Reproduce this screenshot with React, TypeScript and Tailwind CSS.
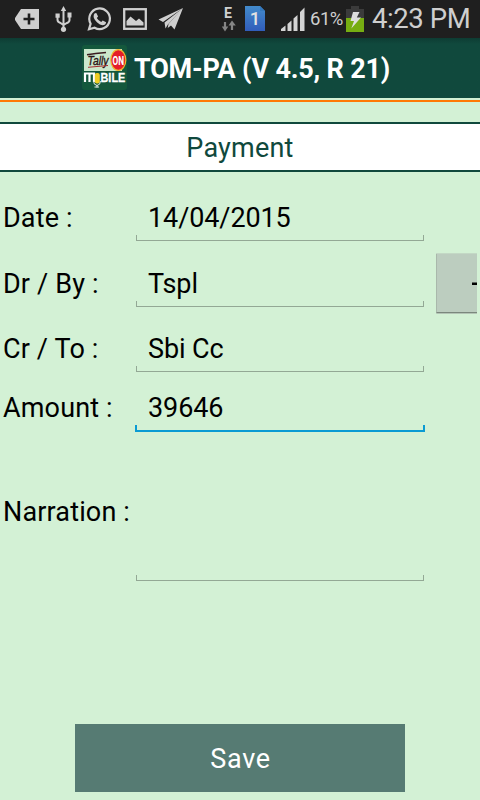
import React from "react";

const FONT = "font-['Roboto','Noto_Sans',sans-serif]";

function StatusBar() {
  return (
    <div className="flex h-[38px] shrink-0 items-center bg-[#1f1f1f] text-[#cfcfcf]">
      <svg width="210" height="38" viewBox="0 0 210 38" fill="#cfcfcf">
        <path d="M21 9H39V29H21L15 20V18Z" />
        <path d="M29 13.5V24.500M23.500 19H34.500" stroke="#1f1f1f" strokeWidth="2.6" />
        <g fill="none" stroke="#cfcfcf" strokeWidth="2">
          <path d="M63.500 10V28M57.500 16V19.500Q57.500 22 60 22.700L63.500 25M69.500 16V20Q69.500 22 67 23L63.500 25" />
        </g>
        <path d="M63.500 6L66.200 11H60.800ZM55.500 13.500h4.200v4.200h-4.200ZM67.500 12.500h4v5h-4Z" />
        <circle cx="63.500" cy="29.300" r="2.600" />
        <path d="M90.600 23.800A10.300 10.300 0 1 1 94.600 27.800L89 29.300Z" fill="none" stroke="#cfcfcf" strokeWidth="2.200" />
        <path d="M94.800 13.200l1.500-.3 1.800 3.500-1.300 1.700q1.600 2.800 4.400 4l1.500-1.600 3.400 1.800q-.3 2.900-3.600 2.900-2.600-.2-5.300-2.800-3.600-3.500-3.600-6.200 0-2 1.200-3Z" />
        <rect x="124.200" y="9.200" width="21.600" height="19.600" fill="none" stroke="#cfcfcf" strokeWidth="2.300" />
        <path d="M126.500 25.500V21L130.500 16.500L136 21L139 18.500L143.500 22.500V25.500Z" />
        <path d="M183 8L158.500 19.500L163 22ZM183 8L164.500 22.500L165.500 28.500L168 24.300ZM183 8L168.500 24L167.700 28L171 25.500L174.500 29.500Z" />
      </svg>
      <svg width="99" height="38" viewBox="210 0 99 38">
        <text x="224" y="17.500" fontFamily="Roboto" fontWeight="700" fontSize="15" fill="#cfcfcf" textLength="8" lengthAdjust="spacingAndGlyphs">E</text>
        <path d="M225 22V28M232 30V24" stroke="#858585" strokeWidth="2.200" />
        <path d="M221.800 26.500H228.300L225 31.500ZM228.500 25.500H235.800L232 20.500Z" fill="#858585" />
        <defs>
          <linearGradient id="sim" x1="0" x2="0" y1="0" y2="1">
            <stop stopColor="#438bcb" />
            <stop offset="1" stopColor="#315dbb" />
          </linearGradient>
        </defs>
        <path d="M245 6H260L265 11V31H245Z" fill="url(#sim)" />
        <path d="M260 6L265 11H260Z" fill="#3478bd" />
        <text x="249.800" y="25" fontFamily="Roboto" fontWeight="500" fontSize="18.500" fill="#e2e2e2">1</text>
        <path d="M281 31V29L285.500 25.500V31ZM287.500 31V24L291.500 20.500V31ZM293.500 31V18.500L297.500 15V31ZM300 31V12L304.500 7.500V31Z" fill="#d4d4d4" />
      </svg>
      <span className="mt-[2px] ml-[1px] w-[34px] whitespace-nowrap text-[18.5px] tracking-[-0.5px]">61%</span>
      <svg className="ml-[2px]" width="18" height="38" viewBox="346 0 18 38">
        <path d="M351 6H359V9H364V31H346V9H351Z" fill="#3b3b3b" />
        <path d="M346 18H364V32H346Z" fill="#77ad12" />
        <path d="M353 12H359.500L356.800 17.500H361L351.300 28.500L354 21H350.500Z" fill="#dedede" />
      </svg>
      <span className="ml-[8px] whitespace-nowrap text-[27.5px] leading-[38px] tracking-[-0.4px]">4:23 PM</span>
    </div>
  );
}

function Logo() {
  return (
    <svg className="-mt-[1px] overflow-visible" width="45" height="45" viewBox="0 0 45 45">
      <rect width="45" height="45" rx="3" fill="#14583c" />
      <path d="M2 4H40V26H2Z" fill="#cbe8cc" />
      <text x="5.500" y="19.500" fontFamily="Liberation Sans" fontStyle="italic" fontWeight="400" fontSize="13.500" fill="#2b1517" stroke="#2b1517" strokeWidth="0.400" textLength="21" lengthAdjust="spacingAndGlyphs">Tally</text>
      <path d="M5 9.800Q13 8.500 24 7.500" stroke="#3b1d20" strokeWidth="1.400" fill="none" />
      <path d="M6 22.300L26 20.500" stroke="#a32a30" strokeWidth="1" />
      <ellipse cx="36.300" cy="15" rx="7.500" ry="10.300" fill="#e51d2a" stroke="#efb52e" strokeWidth="1.200" />
      <text x="30.500" y="19.700" fontFamily="Roboto" fontWeight="700" fontSize="13" fill="#fff" textLength="11.500" lengthAdjust="spacingAndGlyphs">ON</text>
      <path d="M3 37V28.500H12V37M7.500 28.500V37" stroke="#fff" strokeWidth="2.200" fill="none" />
      <text x="18.500" y="37" fontFamily="Liberation Sans" fontWeight="700" fontSize="12.500" fill="#fff" stroke="#fff" strokeWidth="0.300" textLength="24.800" lengthAdjust="spacingAndGlyphs">BILE</text>
      <rect x="12.800" y="28" width="5" height="10.500" rx="2" fill="#f0cd24" />
      <path d="M11.500 36Q11.500 40 15 40.500Q18.500 40 18.500 36M15 40V42.500M12.500 42H17" stroke="#e5ece8" strokeWidth="1" fill="none" />
    </svg>
  );
}

type FieldProps = {
  label: string;
  value: string;
  row: string;
  focused?: boolean;
  children?: React.ReactNode;
};

function Field({ label, value, row, focused, children }: FieldProps) {
  return (
    <div className={`flex shrink-0 ${row}`}>
      <label className="w-[135px] shrink-0 whitespace-nowrap pl-[3px] tracking-[0.15px]">{label}</label>
      <div className="flex w-[290px] shrink-0 flex-col">
        <span className="h-full shrink-0 whitespace-pre pl-[13px] tracking-[-0.1px]">{value}</span>
        <div
          className={
            focused
              ? "-mt-[7px] h-[7px] shrink-0 border-x-2 border-b-2 border-[#0a9bd3]"
              : "mx-px -mt-[6px] h-[6px] shrink-0 border-x border-b border-[#93a895]"
          }
        />
      </div>
      {children}
    </div>
  );
}

export default function App() {
  return (
    <div className={`flex h-[800px] w-[480px] flex-col overflow-hidden bg-[#d3f1d5] text-[27px] text-black ${FONT}`}>
      <StatusBar />
      <header className="flex h-[60px] shrink-0 items-center bg-gradient-to-b from-[#0d3c33] to-[#10493d] to-10% pl-[82px]">
        <Logo />
        <h1 className="mt-[2px] ml-[7px] whitespace-nowrap text-[27px] font-bold tracking-[-0.2px] text-white">TOM-PA (V 4.5, R 21)</h1>
      </header>
      <div className="mt-[2px] h-[2px] shrink-0 bg-[#ff7905]" />
      <h2 className="mt-[20px] h-[50px] shrink-0 border-y-2 border-[#10493d] bg-white text-center text-[27px] leading-[49px] tracking-[0.2px] text-[#10493d]">
        Payment
      </h2>
      <main className="flex flex-1 flex-col">
        <Field label="Date :" value="14/04/2015" row="mt-[23px] h-[46px] leading-[46px]" />
        <Field label="Dr / By :" value="Tspl" row="mt-[20px] h-[46px] leading-[46px]">
          <button className="-mt-[7px] ml-[11px] flex h-[59px] w-[41px] shrink-0 items-center justify-end overflow-hidden rounded-bl-[1px] border-b border-l border-b-[#7b877d] border-l-[#a9b8ab] bg-[#bccdbf] shadow-[0_1px_0_#b3c4b5,0_-1px_0_#c3d8c5]">
            <span className="h-[3px] w-[5px] border-t border-[#5e665f] bg-black" />
          </button>
        </Field>
        <Field label="Cr / To :" value="Sbi Cc" row="mt-[19px] h-[46px] leading-[46px]" />
        <Field label="Amount :" value="39646" row="mt-[12px] h-[48px] leading-[48px]" focused />
        <Field label="Narration :" value="" row="mt-[11px] h-[138px] leading-[138px]" />
        <button className="mx-auto mt-auto mb-[8px] h-[68px] w-[330px] shrink-0 bg-[#567b73] pt-[2px] pl-[1px] text-[27px] leading-[66px] tracking-[0.7px] text-white">
          Save
        </button>
      </main>
    </div>
  );
}
